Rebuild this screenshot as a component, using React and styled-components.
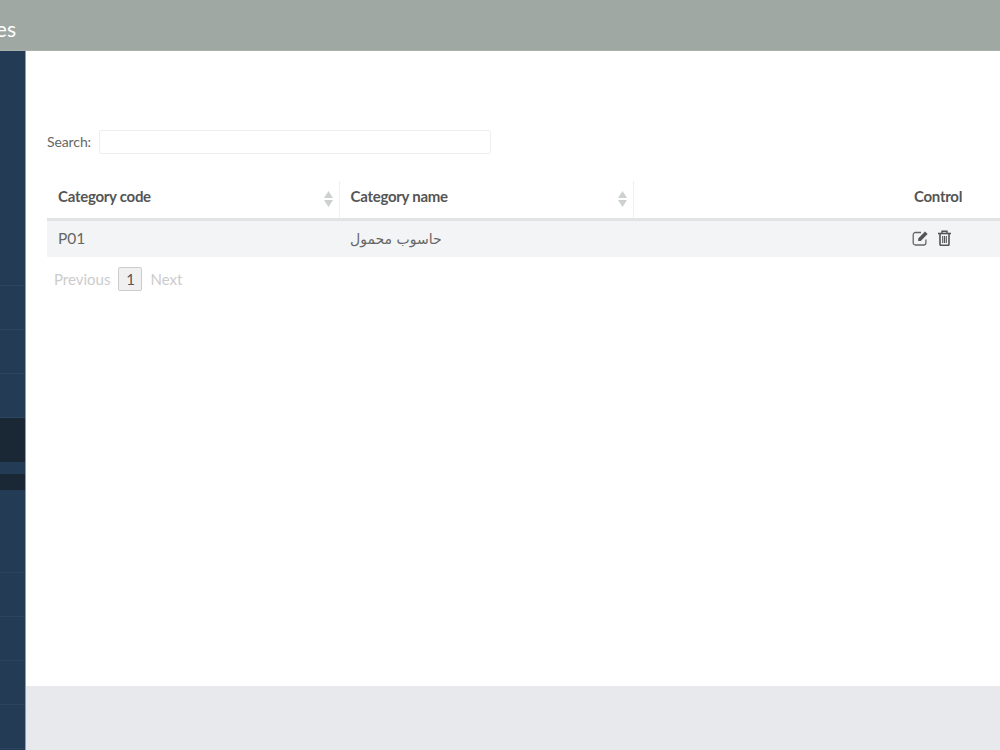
import React from "react";
import styled, { createGlobalStyle } from "styled-components";

const Global = createGlobalStyle`
  html, body { margin: 0; padding: 0; overflow: hidden; height: 750px; }
  body { font-family: Lato, "Open Sans", "Liberation Sans", sans-serif; color: #555; background: #e8e9ed; }
`;
const Page = styled.div`
  width: 1000px; height: 750px; overflow: hidden; display: flex; flex-direction: column;
`;
const Header = styled.header`
  flex: 0 0 51px; background: #9fa8a3; border-bottom: 1px solid #aab1ad; box-sizing: border-box;
  display: flex; align-items: center; justify-content: flex-start; overflow: hidden;
`;
const Title = styled.h1`
  margin: 6px 0 0 -84px; font: 400 21px/1 Lato, "Open Sans", sans-serif; color: #fff; letter-spacing: 0.2px;
`;
const Body = styled.div`
  flex: 1; display: flex; min-height: 0;
`;
const Sidebar = styled.nav`
  flex: 0 0 26px; background: #243b55; border-right: 1px solid #8e9cab; box-sizing: border-box;
  display: flex; flex-direction: column; overflow: hidden;
`;
const TopGap = styled.div`flex: 0 0 235px; box-sizing: border-box; border-bottom: 1px solid #2b4560;`;
const NavItem = styled.div`
  flex: 0 0 44px; box-sizing: border-box;
  background: ${p => (p.$active ? "#1a2735" : "transparent")};
  border-bottom: 1px solid ${p => (p.$active ? "#1a2735" : "#2b4560")};
`;
const SubMenu = styled.div`
  flex: 0 0 67px; box-sizing: border-box; padding: 12px 0 39px;
`;
const SubItem = styled.div`height: 16px; background: #1a2735;`;
const Main = styled.div`flex: 1; display: flex; flex-direction: column; min-width: 0;`;
const Content = styled.main`
  flex: 0 0 635px; background: #fff; box-sizing: border-box; padding: 79px 0 0 21px; overflow: hidden;
`;
const Footer = styled.footer`flex: 1; background: #e8e9ed;`;
const SearchRow = styled.label`
  display: flex; align-items: flex-start; gap: 8px; height: 24px; line-height: 23px; font-size: 14px; color: #666; letter-spacing: -0.1px;
`;
const SearchInput = styled.input`
  width: 392px; height: 24px; box-sizing: border-box; border: 1px solid #eeeeee; border-radius: 2px;
  background: #fff; outline: none;
`;
const Table = styled.table`
  margin-top: 27px; width: 1010px; border-collapse: collapse; table-layout: fixed;
`;
const Th = styled.th`
  position: relative; height: 38px; padding: 0 11px 7px; box-sizing: border-box; text-align: left;
  font-size: 15px; font-weight: 700; color: #555; letter-spacing: -0.27px;
  border-bottom: 3px solid #e1e4e3; border-right: ${p => (p.$sep ? "1px solid #f0f0f0" : "0")};
`;
const SortIcon = styled.svg`
  position: absolute; right: 6px; top: 10px; width: 9px; height: 16px; fill: #cdd0d0;
`;
const Row = styled.tr`background: #f2f4f5;`;
const Td = styled.td`
  height: 38px; padding: 0 11px 2px; font-size: 15.5px; color: #666; box-sizing: border-box;
`;
const Ar = styled.span`font-family: "DejaVu Sans", sans-serif; font-size: 14px;`;
const Icons = styled.div`display: flex; align-items: center; gap: 9px; color: #555; margin-left: -2px;`;
const EditSvg = styled.svg`width: 17px; height: 16px; fill: none; stroke: #666;`;
const TrashSvg = styled.svg`width: 13px; height: 16px; fill: none; stroke: #555;`;
const Pager = styled.div`
  display: flex; align-items: center; margin: 10px 0 0 7px; font-size: 15px; color: #ccc;
`;
const PageNum = styled.span`
  display: flex; align-items: center; justify-content: center; width: 24px; height: 24px; box-sizing: border-box;
  margin: 0 8px; border: 1px solid #ccc; border-radius: 2px; background: #f0f0f0; color: #555;
`;
const Sort = () => (
  <SortIcon viewBox="0 0 9 16"><path d="M4.5 0 9 7H0zM0 9h9l-4.5 7z" /></SortIcon>
);
const EditIcon = () => (
  <EditSvg viewBox="0 0 17 16">
    <path d="M9 2.5H3.5A2.2 2.2 0 0 0 1.2 4.7v8.1a2.2 2.2 0 0 0 2.3 2.2h8.2a2.2 2.2 0 0 0 2.2-2.2V9.5" strokeWidth="1.3" />
    <path d="M6.2 8.4 13 1.4l2.6 2.6-6.8 7H6.2z" fill="#555" stroke="none" />
  </EditSvg>
);
const TrashIcon = () => (
  <TrashSvg viewBox="0 0 13 16">
    <path d="M0 3.5h13" strokeWidth="1.6" />
    <path d="M4 3V1.2h5V3" strokeWidth="1.4" />
    <path d="M2 3.5v10.7A1.1 1.1 0 0 0 3.1 15.3h6.8a1.1 1.1 0 0 0 1.1-1.1V3.5" strokeWidth="1.6" />
    <path d="M4.7 6v7M6.5 6v7M8.3 6v7" strokeWidth="1.1" />
  </TrashSvg>
);

export default function App() {
  return (
    <Page>
      <Global />
      <Header><Title>Categories</Title></Header>
      <Body>
        <Sidebar>
          <TopGap />
          <NavItem /><NavItem /><NavItem />
          <NavItem $active />
          <SubMenu><SubItem /></SubMenu>
          <NavItem /><NavItem /><NavItem /><NavItem /><NavItem />
        </Sidebar>
        <Main>
          <Content>
            <SearchRow>Search: <SearchInput /></SearchRow>
            <Table>
              <colgroup><col width="292" /><col width="294" /><col width="270" /><col /></colgroup>
              <thead>
                <tr>
                  <Th $sep>Category code<Sort /></Th>
                  <Th $sep>Category name<Sort /></Th>
                  <Th />
                  <Th>Control</Th>
                </tr>
              </thead>
              <tbody>
                <Row>
                  <Td>P01</Td>
                  <Td><Ar>حاسوب محمول</Ar></Td>
                  <Td />
                  <Td><Icons><EditIcon /><TrashIcon /></Icons></Td>
                </Row>
              </tbody>
            </Table>
            <Pager>Previous<PageNum>1</PageNum>Next</Pager>
          </Content>
          <Footer />
        </Main>
      </Body>
    </Page>
  );
}
